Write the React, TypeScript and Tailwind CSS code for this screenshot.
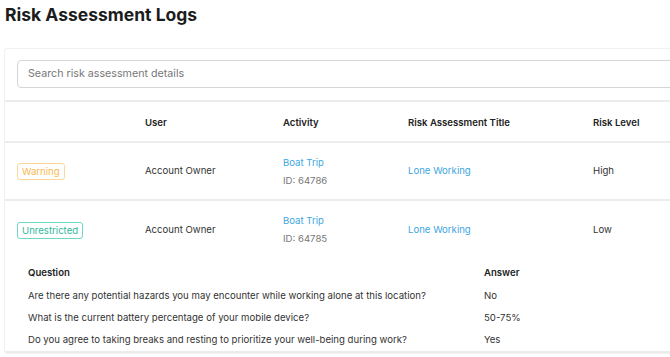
import React from 'react';

interface LogRow {
  status: 'Warning' | 'Unrestricted';
  user: string;
  activity: string;
  id: string;
  title: string;
  level: string;
}

const rows: LogRow[] = [
  { status: 'Warning', user: 'Account Owner', activity: 'Boat Trip', id: '64786', title: 'Lone Working', level: 'High' },
  { status: 'Unrestricted', user: 'Account Owner', activity: 'Boat Trip', id: '64785', title: 'Lone Working', level: 'Low' },
];

const answers = [
  { q: 'Are there any potential hazards you may encounter while working alone at this location?', a: 'No' },
  { q: 'What is the current battery percentage of your mobile device?', a: '50-75%' },
  { q: 'Do you agree to taking breaks and resting to prioritize your well-being during work?', a: 'Yes' },
];

const StatusBadge: React.FC<{ status: LogRow['status'] }> = ({ status }) =>
  status === 'Warning' ? (
    <span className="inline-block rounded-[3px] border border-[#fbd897] px-[4px] leading-[15px] text-[#f5b94f]">
      Warning
    </span>
  ) : (
    <span className="inline-block rounded-[3px] border border-[#6fd8c4] px-[4px] leading-[15px] text-[#2fb99b]">
      Unrestricted
    </span>
  );

export default function App() {
  return (
    <div className="w-[670px] h-[357px] overflow-hidden bg-white text-[9.6px] text-[#333]" style={{ fontFamily: 'Inter, "Noto Sans", sans-serif' }}>
      <h1 className="px-[5px] pt-[3px] text-[17.5px] font-bold leading-[24px] text-[#1c1c1c]">Risk Assessment Logs</h1>

      <div className="ml-[4px] mt-[21px] w-[720px] rounded-[3px] border border-[#f1f1f1]">
        <div className="px-3 pt-[11px] pb-3">
          <div className="flex h-[28px] items-center rounded-[4px] border border-[#d6d6d6] px-[10px] text-[10.7px] text-[#777]">
            Search risk assessment details
          </div>
        </div>

        <table className="w-full table-fixed border-collapse">
          <colgroup>
            <col className="w-[128px]" />
            <col className="w-[138px]" />
            <col className="w-[125px]" />
            <col className="w-[185px]" />
            <col />
          </colgroup>
          <thead>
            <tr className="h-[41px] border-y-2 border-[#ececec] text-left">
              <th className="px-3 pt-[4px] font-semibold text-[#222]"></th>
              <th className="px-3 pt-[4px] font-semibold text-[#222]">User</th>
              <th className="px-3 pt-[4px] font-semibold text-[#222]">Activity</th>
              <th className="px-3 pt-[4px] font-semibold text-[#222]">Risk Assessment Title</th>
              <th className="px-3 pt-[4px] font-semibold text-[#222]">Risk Level</th>
            </tr>
          </thead>
          <tbody>
            {rows.map((r, i) => (
              <tr key={r.id} className={i === 0 ? 'h-[58px] border-b-2 border-[#ececec]' : 'h-[58px]'}>
                <td className="px-3 pt-[1px]">
                  <StatusBadge status={r.status} />
                </td>
                <td className="px-3 pt-[1px]">{r.user}</td>
                <td className="px-3">
                  <div className="leading-[19px] text-[#3ea6df]">{r.activity}</div>
                  <div className="leading-[18px] text-[#777]">ID: {r.id}</div>
                </td>
                <td className="px-3 pt-[1px] text-[#3ea6df]">{r.title}</td>
                <td className="px-3 pt-[1px]">{r.level}</td>
              </tr>
            ))}
          </tbody>
        </table>

        <div className="border-b-2 border-[#ececec] pl-[23px] pt-[3px]">
          <div className="grid grid-cols-[456px_1fr] leading-[22px]">
            <div className="font-semibold leading-[24px] text-[#222]">Question</div>
            <div className="font-semibold leading-[24px] text-[#222]">Answer</div>
            {answers.map((a) => (
              <React.Fragment key={a.q}>
                <div>{a.q}</div>
                <div>{a.a}</div>
              </React.Fragment>
            ))}
          </div>
        </div>
      </div>
    </div>
  );
}
